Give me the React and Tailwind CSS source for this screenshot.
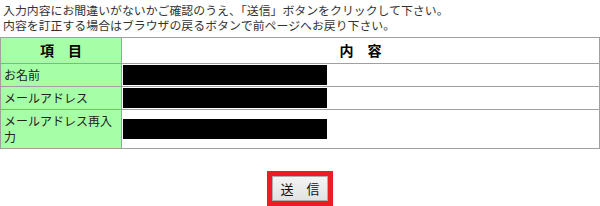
import React from "react";

const rows = [
  { label: "お名前" },
  { label: "メールアドレス" },
  { label: "メールアドレス再入力" },
];

const App = () => {
  return (
    <div className="w-[600px] h-[206px] overflow-hidden bg-white font-['Noto_Sans_CJK_JP','Noto_Sans',sans-serif] text-[#222]">
      <p className="pl-[3px] pt-[2px] text-[11.9px] leading-[15px] text-[#333]">
        入力内容にお間違いがないかご確認のうえ、「送信」ボタンをクリックして下さい。
        <br />
        内容を訂正する場合はブラウザの戻るボタンで前ページへお戻り下さい。
      </p>

      <table className="mt-[5px] w-[600px] table-fixed border-collapse border border-[#a0a0a0] text-[12px] leading-[16px]">
        <colgroup>
          <col className="w-[121px]" />
          <col />
        </colgroup>
        <thead>
          <tr>
            <th className="h-[26px] border border-[#a0a0a0] bg-[#a6ffa6] p-0 text-center text-[14px] font-bold leading-[19px] text-black">
              項　目
            </th>
            <th className="border border-[#a0a0a0] p-0 text-center text-[14px] font-bold leading-[19px] text-black">
              内　容
            </th>
          </tr>
        </thead>
        <tbody>
          {rows.map((row) => (
            <tr key={row.label}>
              <td className="border border-[#a0a0a0] bg-[#a6ffa6] px-[3px] py-[3px] align-middle">
                {row.label}
              </td>
              <td className="border border-[#a0a0a0] p-[1px] align-middle">
                <div className="h-[20px] w-[204px] bg-black" />
              </td>
            </tr>
          ))}
        </tbody>
      </table>

      <div className="mt-[22px] flex justify-center">
        <div className="border-[5px] border-[#ed1c24]">
          <button
            type="button"
            className="flex h-[25px] w-[56px] items-center justify-center border border-[#adadad] bg-gradient-to-b from-[#f4f4f4] to-[#e2e2e2] text-[13px] leading-none text-[#111]"
          >
            送　信
          </button>
        </div>
      </div>
    </div>
  );
};

export default App;
